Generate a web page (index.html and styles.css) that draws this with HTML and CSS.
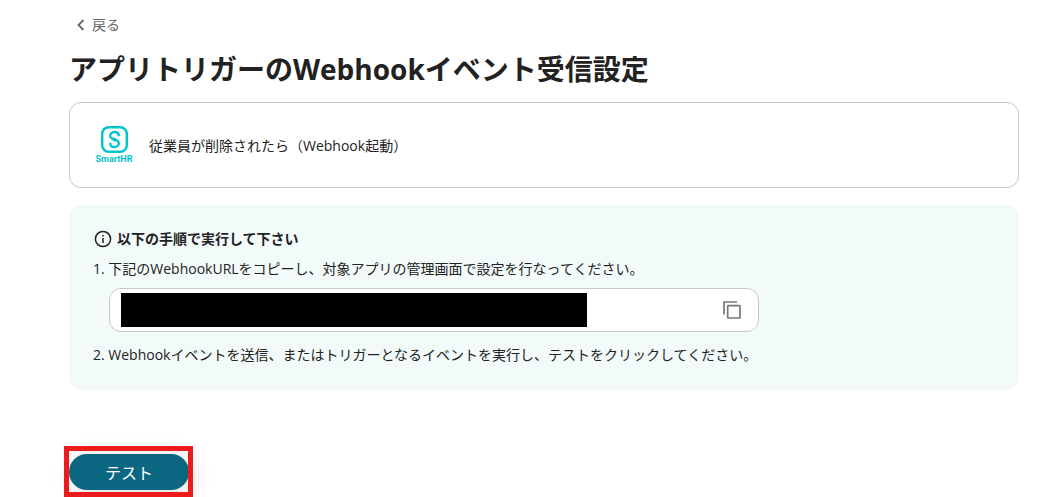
FILE: index.html
```html
<!DOCTYPE html>
<html lang="ja">
<head>
    <meta charset="UTF-8">
    <meta name="viewport" content="width=device-width, initial-scale=1.0">
    <title>アプリトリガーのWebhookイベント受信設定</title>
    <link rel="stylesheet" href="styles.css">
</head>
<body>
    <main class="page">
        <a class="back-link" href="#">
            <svg class="back-icon" width="8" height="12" viewBox="0 0 8 12" fill="none" stroke="currentColor" stroke-width="1.8">
                <path d="M6.5 1 1.5 6l5 5"/>
            </svg>
            戻る
        </a>
        <h1>アプリトリガーのWebhookイベント受信設定</h1>

        <section class="trigger-card">
            <div class="app-logo">
                <svg width="27" height="27" viewBox="0 0 27 27" fill="none" stroke="currentColor">
                    <rect x="1.2" y="1.2" width="24.6" height="24.6" rx="6.5" stroke-width="2.4"/>
                    <path d="M17.8 10.2V9.8C17.8 7.5 16 6 13.6 6S9.2 7.600 9.200 9.700c0 1.500.8 2.400 2 3.100l3.800 2.100M9.200 16.800v.4C9.200 19.500 11 21 13.400 21s4.400-1.600 4.400-3.700c0-1.500-.8-2.400-2-3.100L12 12.100" stroke-width="2.3"/>
                </svg>
                <span class="app-name">SmartHR</span>
            </div>
            <p>従業員が削除されたら（Webhook起動）</p>
        </section>

        <section class="steps">
            <h2>
                <svg width="18" height="18" viewBox="0 0 18 18" fill="none" stroke="currentColor" stroke-width="1.5">
                    <circle cx="9" cy="9" r="7.6"/>
                    <path d="M9 8v5M9 5v1.6"/>
                </svg>
                以下の手順で実行して下さい
            </h2>
            <p><label for="webhookUrl">1. 下記のWebhookURLをコピーし、対象アプリの管理画面で設定を行なってください。</label></p>
            <div class="url-field">
                <input class="url-input" id="webhookUrl" type="text" readonly>
                <button class="copy-button" type="button" aria-label="コピー">
                    <svg width="18" height="18" viewBox="0 0 18 18" fill="none" stroke="currentColor" stroke-width="1.7">
                        <path d="M1 13.5V1H14"/>
                        <rect x="4.7" y="4.7" width="12.3" height="12.3" rx="0.5"/>
                    </svg>
                </button>
            </div>
            <p>2. Webhookイベントを送信、またはトリガーとなるイベントを実行し、テストをクリックしてください。</p>
        </section>

        <div class="action">
            <button class="test-button" type="button">テスト</button>
        </div>
    </main>
</body>
</html>
```
FILE: styles.css
```css
* {
    box-sizing: border-box;
}
body {
    margin: 0;
    font-family: "Open Sans", "Noto Sans CJK JP", sans-serif;
    font-size: 14px;
    line-height: 24px;
    color: #222;
    background: #fff;
}
h1, h2, p {
    margin: 0;
}
svg {
    display: block;
    flex: none;
}
button {
    padding: 0;
    border: none;
    font-family: inherit;
    cursor: pointer;
}
.page {
    min-height: 100vh;
    padding: 13px 24px 0 69px;
}
.back-link {
    display: inline-flex;
    align-items: center;
    gap: 7px;
    padding-left: 8px;
    color: #666;
    text-decoration: none;
    vertical-align: top;
}
h1 {
    margin-top: 10px;
    font-size: 28px;
    line-height: 44px;
}
.trigger-card {
    display: flex;
    align-items: center;
    gap: 16px;
    margin-top: 11px;
    padding: 23px 25px 22px;
    border: 1px solid #c8c8c8;
    border-radius: 12px;
}
.app-logo {
    display: flex;
    flex-direction: column;
    align-items: center;
    width: 38px;
    color: #00c4cc;
}
.app-name {
    font-family: Roboto, sans-serif;
    font-size: 9px;
    font-weight: bold;
    line-height: 12px;
}
.steps {
    margin-top: 17px;
    padding: 22px 24px 23px;
    border-radius: 12px;
    background: #f2fbfa;
}
.steps h2 {
    display: flex;
    align-items: center;
    gap: 5px;
    margin-bottom: 6px;
    padding-left: 1px;
    font-size: 14px;
    line-height: 24px;
}
.url-field {
    display: flex;
    align-items: center;
    justify-content: space-between;
    max-width: 650px;
    height: 44px;
    margin: 7px 0 11px 16px;
    padding: 0 17px 0 11px;
    border: 1px solid #c8c8c8;
    border-radius: 12px;
    background: #fff;
}
/* URL stays masked */
.url-input {
    width: 466px;
    height: 34px;
    border: none;
    color: #000;
    background: #000;
}
.copy-button {
    color: #777;
    background: none;
}
.action {
    position: relative;
    width: 120px;
    margin-top: 64px;
}
.action::after {
    content: "";
    position: absolute;
    inset: -8px -4px -7px -5px;
    border: 5px solid #ec1c1c;
    pointer-events: none;
}
.test-button {
    display: block;
    width: 100%;
    height: 36px;
    border-radius: 18px;
    color: #fff;
    background: #0b6781;
    font-size: 16px;
    box-shadow: 4px 4px 24px rgba(0, 0, 0, 0.14);
}
```
